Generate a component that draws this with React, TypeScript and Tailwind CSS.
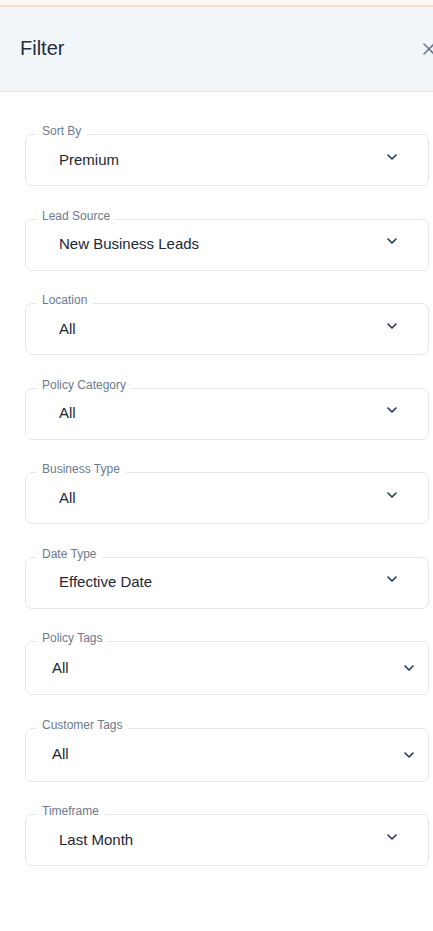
import React from "react";

type Field = { label: string; value: string; tag?: boolean };

const fields: Field[] = [
  { label: "Sort By", value: "Premium" },
  { label: "Lead Source", value: "New Business Leads" },
  { label: "Location", value: "All" },
  { label: "Policy Category", value: "All" },
  { label: "Business Type", value: "All" },
  { label: "Date Type", value: "Effective Date" },
  { label: "Policy Tags", value: "All", tag: true },
  { label: "Customer Tags", value: "All", tag: true },
  { label: "Timeframe", value: "Last Month" },
];

const Chevron = ({ className }: { className?: string }) => (
  <svg width="10" height="6" viewBox="0 0 10 6" fill="none" className={className}>
    <polyline points="1,1 5,5 9,1" stroke="#1e3554" strokeWidth="1.6" strokeLinecap="round" strokeLinejoin="round" />
  </svg>
);

const SelectField = ({ label, value, tag }: Field) => {
  return (
    <div
      className={
        "relative w-[404px] rounded-[7px] border border-[#e3e6eb] flex items-center " +
        (tag ? "h-[54px] pl-[26px] pr-[14px]" : "h-[52px] pl-[33px] pr-[31px]")
      }
    >
      <span className="absolute -top-[10px] left-[10px] bg-white px-[6px] text-[12px] leading-[12px] text-[#6d7a8e]">
        {label}
      </span>
      <span className="text-[15px] text-[#1c2737]">{value}</span>
      <Chevron className={"ml-auto " + (tag ? "" : "-mt-[7px]")} />
    </div>
  );
};

export default function App() {
  return (
    <div className="w-[433px] h-[931px] overflow-hidden bg-white font-['Liberation_Sans',Arial,sans-serif]">
      <div className="h-[5px] bg-[#fff6f2]" />
      <div className="h-[2px] bg-[#f5ded3]" />
      <div className="flex items-center h-[85px] pl-5 bg-[#f3f6f9] border-b border-[#e3e7eb] overflow-hidden">
        <h2 className="text-[20px] text-[#1f2d3d] -mt-[2px]">Filter</h2>
        <svg width="12" height="12" viewBox="0 0 12 12" className="ml-auto -mr-[2px] shrink-0">
          <path d="M1 1L11 11M11 1L1 11" stroke="#6b7d95" strokeWidth="1.6" strokeLinecap="round" />
        </svg>
      </div>
      <div className="flex flex-col gap-[32.5px] pl-[25px] pt-[42px]">
        {fields.map((f) => (
          <SelectField key={f.label} {...f} />
        ))}
      </div>
    </div>
  );
}
